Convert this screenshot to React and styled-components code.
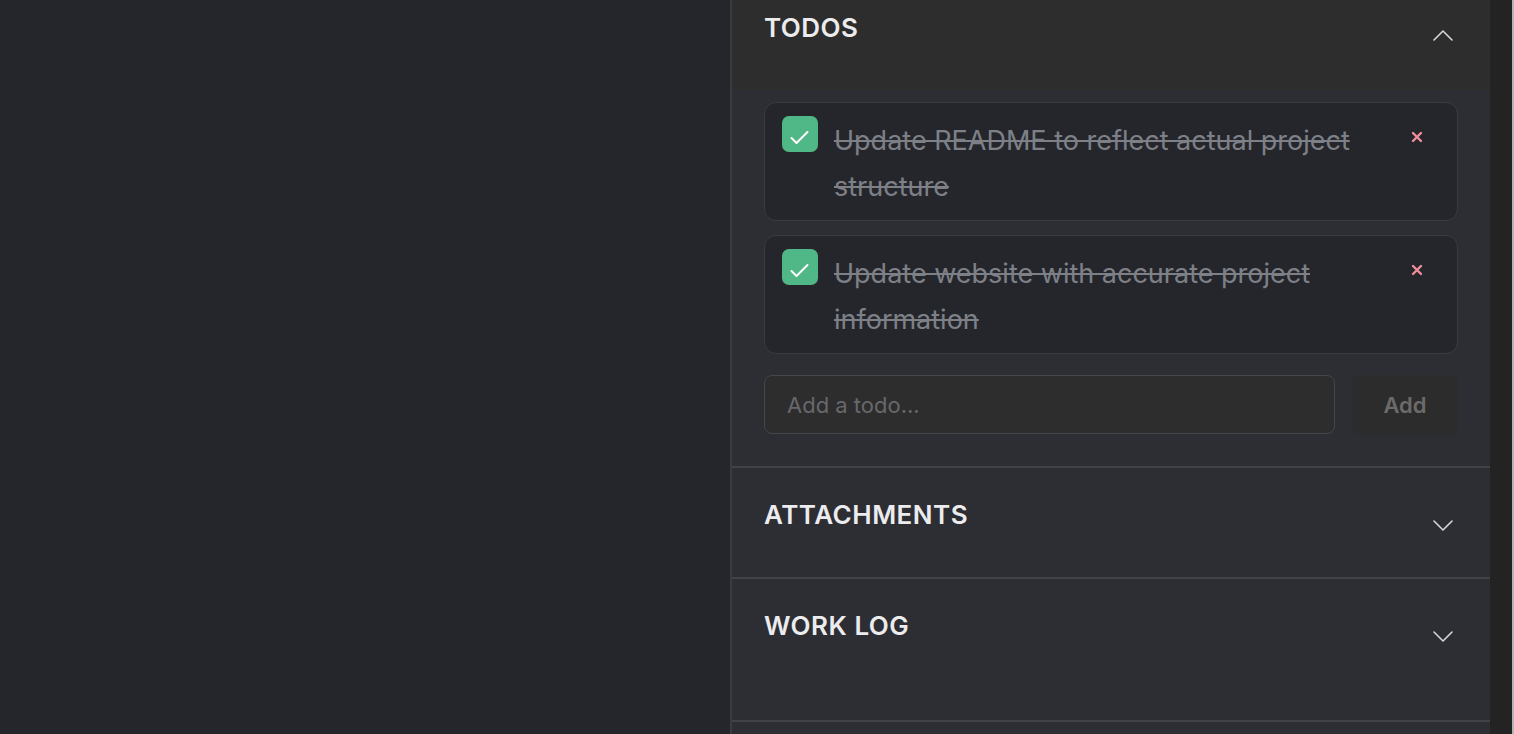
import React from "react";
import styled, { createGlobalStyle } from "styled-components";

const GlobalStyle = createGlobalStyle`
  html, body {
    margin: 0;
    padding: 0;
    background: #25262b;
    font-family: Inter, "Noto Sans", sans-serif;
  }
  * { box-sizing: border-box; }
`;

const todos = [
  { id: 1, text: "Update README to reflect actual project structure", done: true },
  { id: 2, text: "Update website with accurate project information", done: true },
];

function Chevron({ up }) {
  return (
    <ChevronIcon viewBox="0 0 20 20" fill="none" $up={up}>
      <polyline
        points={up ? "1,14 10,5 19,14" : "1,6 10,15 19,6"}
        stroke="#d6d6d8"
        strokeWidth="1.6"
        strokeLinecap="round"
        strokeLinejoin="round"
      />
    </ChevronIcon>
  );
}

function TodoItem({ todo }) {
  return (
    <Card>
      <Check $done={todo.done}>
        {todo.done && (
          <svg width="36" height="36" viewBox="0 0 36 36" fill="none">
            <polyline
              points="9.5,22 14.5,27 25.5,16"
              stroke="#ffffff"
              strokeWidth="2"
              strokeLinecap="round"
              strokeLinejoin="round"
            />
          </svg>
        )}
      </Check>
      <TodoText $done={todo.done}>{todo.text}</TodoText>
      <DeleteButton aria-label="Delete">
        <svg width="12" height="12" viewBox="0 0 12 12">
          <path d="M2 2 L10 10 M10 2 L2 10" stroke="#f08f99" strokeWidth="2.4" strokeLinecap="round" />
        </svg>
      </DeleteButton>
    </Card>
  );
}

export default function App() {
  return (
    <>
      <GlobalStyle />
      <Page>
        <Backdrop />
        <Panel>
          <TodosSection>
            <StickyHeader>
              <SectionTitle>TODOS</SectionTitle>
              <Chevron up />
            </StickyHeader>
            <TodoList>
              {todos.map((t) => (
                <TodoItem key={t.id} todo={t} />
              ))}
              <AddRow>
                <TodoInput placeholder="Add a todo..." />
                <AddButton>Add</AddButton>
              </AddRow>
            </TodoList>
          </TodosSection>

          <Section $bottom={42}>
            <HeaderRow>
              <SectionTitle>ATTACHMENTS</SectionTitle>
              <Chevron />
            </HeaderRow>
          </Section>

          <Section $bottom={74}>
            <HeaderRow>
              <SectionTitle>WORK LOG</SectionTitle>
              <Chevron />
            </HeaderRow>
          </Section>

          <Section $bottom={40} />
        </Panel>
        <ScrollTrack />
      </Page>
    </>
  );
}

const Page = styled.div`
  display: flex;
  height: 734px;
  overflow: hidden;
`;

const Backdrop = styled.div`
  flex: 1;
  background: #25262b;
`;

const Panel = styled.div`
  width: 760px;
  background: #2d2e33;
  border-left: 2px solid #3a3b3f;
  display: flex;
  flex-direction: column;
`;

const ScrollTrack = styled.div`
  width: 24px;
  background: #232323;
  border-right: 2px solid #b4b4b4;
`;

const TodosSection = styled.section`
  border-bottom: 2px solid #414246;
  padding-bottom: 31px;
`;

const StickyHeader = styled.div`
  height: 90px;
  background: #2d2d2d;
  padding: 12px 32px 0 32px;
  display: flex;
  justify-content: space-between;
  align-items: flex-start;
`;

const Section = styled.section`
  border-bottom: 2px solid #414246;
  padding: 31px 32px ${(p) => p.$bottom}px 32px;
`;

const HeaderRow = styled.div`
  display: flex;
  justify-content: space-between;
  align-items: flex-start;
`;

const SectionTitle = styled.h2`
  margin: 0;
  font-size: 26px;
  line-height: 32px;
  font-weight: 600;
  color: #ececee;
  letter-spacing: 0.5px;
`;

const ChevronIcon = styled.svg`
  width: 20px;
  height: 20px;
  margin-top: ${(p) => (p.$up ? 14 : 16)}px;
  margin-right: 5px;
`;

const TodoList = styled.div`
  padding: 12px 32px 0 32px;
  display: flex;
  flex-direction: column;
  gap: 14px;
`;

const Card = styled.div`
  display: flex;
  align-items: flex-start;
  background: #25262b;
  border: 1.5px solid #3a3b40;
  border-radius: 12px;
  padding: 13px 28px 10px 17px;
`;

const Check = styled.div`
  flex: none;
  width: 36px;
  height: 36px;
  border-radius: 7px;
  background: ${(p) => (p.$done ? "#50b786" : "transparent")};
  border: ${(p) => (p.$done ? "none" : "1.5px solid #5a5b60")};
`;

const TodoText = styled.div`
  flex: 1;
  margin: 2px 30px 0 16px;
  font-size: 27px;
  line-height: 46px;
  color: #7d8087;
  text-decoration: ${(p) => (p.$done ? "line-through" : "none")};
  text-decoration-thickness: 2px;
`;

const DeleteButton = styled.button`
  flex: none;
  width: 24px;
  height: 24px;
  margin-top: 9px;
  padding: 0;
  border: none;
  background: transparent;
  display: flex;
  align-items: center;
  justify-content: center;
  cursor: pointer;
`;

const AddRow = styled.div`
  display: flex;
  gap: 17px;
  margin-top: 7px;
`;

const TodoInput = styled.input`
  flex: none;
  width: 571px;
  height: 59px;
  background: #2d2d2d;
  border: 1.5px solid #45464a;
  border-radius: 8px;
  padding: 0 22px;
  font-family: Inter, "Noto Sans", sans-serif;
  font-size: 22px;
  color: #e0e0e0;
  outline: none;
  &::placeholder {
    color: #67686c;
  }
`;

const AddButton = styled.button`
  flex: 1;
  height: 60px;
  background: #2c2c2c;
  border: none;
  border-radius: 8px;
  font-family: Inter, "Noto Sans", sans-serif;
  font-size: 22px;
  font-weight: 600;
  color: #6b6b6b;
  cursor: pointer;
`;
